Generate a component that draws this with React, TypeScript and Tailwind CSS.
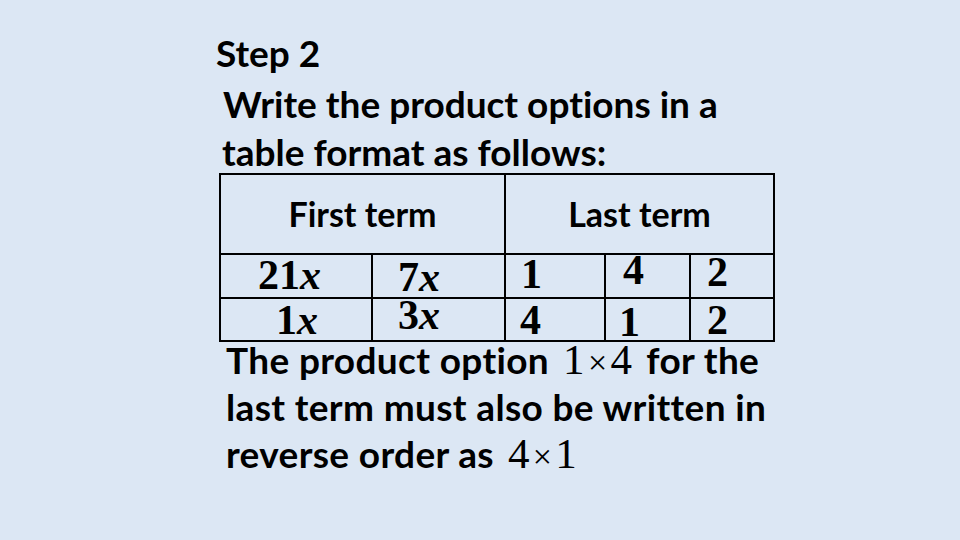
import React from 'react'

const sans = { fontFamily: 'Lato, "Open Sans", sans-serif' }
const serif = { fontFamily: '"Liberation Serif", "Times New Roman", serif' }

function Num({ children, className }: { children: React.ReactNode; className: string }) {
  return (
    <div className={`bg-[#dce7f4] ${className}`}>
      <span className="block text-[42px] font-bold leading-[30px] text-black" style={serif}>
        {children}
      </span>
    </div>
  )
}

function Term({ n }: { n: string }) {
  return (
    <>
      {n}
      <i>x</i>
    </>
  )
}

function Mult({ a, b }: { a: string; b: string }) {
  return (
    <span className="mx-[14px] inline-block text-[43px] font-normal leading-none" style={serif}>
      {a}
      <span className="mx-[3px] text-[34px]">×</span>
      {b}
    </span>
  )
}

export default function App() {
  return (
    <div
      className="h-[540px] w-[960px] overflow-hidden bg-[#dce7f4] text-black [font-variant-ligatures:none]"
      style={sans}
    >
      <div className="pl-[216px] pt-[29px]">
        <div className="h-[144px] text-[37px] font-bold leading-[48px]">
          <div className="mb-[3px]">Step 2</div>
          <div className="pl-[7px]">Write the product options in a</div>
          <div className="pl-[6px]">table format as follows:</div>
        </div>

        <div className="ml-[3px] grid w-[556px] grid-cols-[150px_131px_98px_83px_82px] grid-rows-[78px_42px_41px] gap-[2px] border-2 border-black bg-black">
          <div className="col-span-2 flex items-center justify-center bg-[#dce7f4] pb-[2px] text-[34px] font-bold">
            First term
          </div>
          <div className="col-span-3 flex items-center justify-center bg-[#dce7f4] pb-[2px] text-[34px] font-bold">
            Last term
          </div>

          <Num className="pl-[37px] pt-[5px]"><Term n="21" /></Num>
          <Num className="pl-[25px] pt-[7px]"><Term n="7" /></Num>
          <Num className="pl-[15px] pt-[4px]">1</Num>
          <Num className="pl-[17px] pt-0">4</Num>
          <Num className="pl-[16px] pt-[2px]">2</Num>

          <Num className="pl-[55px] pt-[6px]"><Term n="1" /></Num>
          <Num className="pl-[25px] pt-[1px]"><Term n="3" /></Num>
          <Num className="pl-[14px] pt-[6px]">4</Num>
          <Num className="pl-[13px] pt-[8px]">1</Num>
          <Num className="pl-[16px] pt-[6px]">2</Num>
        </div>

        <div className="-mt-[6px] pl-[10px] text-[37px] font-bold leading-[47px] tracking-[0.35px]">
          <div>
            The product option
            <Mult a="1" b="4" />
            for the
          </div>
          <div>last term must also be written in</div>
          <div>
            reverse order as
            <Mult a="4" b="1" />
          </div>
        </div>
      </div>
    </div>
  )
}
